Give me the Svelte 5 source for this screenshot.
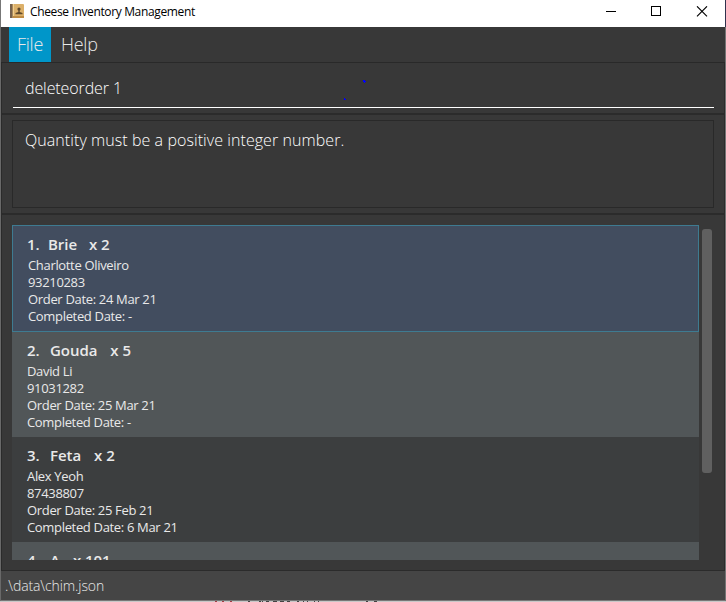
<script>
  const orders = [
    { n: 1, cheese: 'Brie', qty: 2, customer: 'Charlotte Oliveiro', phone: '93210283', ordered: '24 Mar 21', completed: '-' },
    { n: 2, cheese: 'Gouda', qty: 5, customer: 'David Li', phone: '91031282', ordered: '25 Mar 21', completed: '-' },
    { n: 3, cheese: 'Feta', qty: 2, customer: 'Alex Yeoh', phone: '87438807', ordered: '25 Feb 21', completed: '6 Mar 21' },
    { n: 4, cheese: 'A', qty: 101, customer: '', phone: '', ordered: '', completed: '' }
  ];
</script>

<div class="window">
  <header class="titlebar">
    <svg class="logo" width="15" height="15" viewBox="0 0 15 15">
      <rect x="0" y="0" width="14" height="14" rx="1" fill="#dcb069" />
      <rect x="0" y="0" width="2.5" height="14" fill="#76614d" />
      <rect x="3" y="0" width="1" height="14" fill="#f0cf91" />
      <rect x="3" y="12" width="11" height="2" fill="#bf8c44" />
      <circle cx="9" cy="5" r="1.6" fill="#5f492c" />
      <path d="M8.3 6h1.4v2l2.8 1v1.3h-7V9l2.8-1z" fill="#5f492c" />
    </svg>
    <span class="title">Cheese Inventory Management</span>
    <svg class="controls" width="104" height="12" viewBox="0 0 104 12" fill="none" stroke="#000">
      <path d="M0 5.5h10" shape-rendering="crispEdges" />
      <rect x="45.5" y=".5" width="9" height="9" shape-rendering="crispEdges" />
      <path d="M91 .3l10 10M101 .3l-10 10" stroke-width="1.1" />
    </svg>
  </header>
  <div class="body">
    <nav><span class="menu active">File</span><span class="menu">Help</span></nav>
    <section class="command">
      <div class="field"><span>deleteorder 1</span></div>
      <svg class="specks" width="24" height="22" viewBox="0 0 24 22" fill="#0000ff">
        <path d="M19 0h2v1h1v1h-1v1h-1V2h-1zM0 18h1v1H0zM0 19h2v1H0z" />
      </svg>
    </section>
    <section class="result"><div class="message"><span>Quantity must be a positive integer number.</span></div></section>
    <main>
      <div class="list">
        {#each orders as o, i}
          <article class:selected={i === 0} class:alt={i % 2 === 1}>
            <h2><span class="idx">{o.n}.</span><span class="cheese">{o.cheese}</span><span class="qty">x {o.qty}</span></h2>
            {#if o.customer}
              <p>{o.customer}</p>
              <p>{o.phone}</p>
              <p>Order Date: {o.ordered}</p>
              <p>Completed Date: {o.completed}</p>
            {/if}
          </article>
        {/each}
      </div>
      <div class="scroll"><div class="thumb"></div></div>
    </main>
    <footer><span>.\data\chim.json</span></footer>
  </div>
  <svg class="under" width="726" height="1" viewBox="0 0 726 1" shape-rendering="crispEdges" fill="none">
    <path d="M215 .5h2M222 .5h2M230 .5h2" stroke="#a33e45" />
    <path d="M248 .5h2M259 .5h2M262 .5h1M266 .5h3M273 .5h4M280 .5h4M287 .5h3M297 .5h2M303 .5h1M307 .5h1M314 .5h1M318 .5h1M366 .5h2M374 .5h3" stroke="#444" />
  </svg>
</div>

<style>
  :global(body) { overflow: hidden; }
  * { box-sizing: border-box; }
  .window { width: 726px; height: 602px; display: flex; flex-direction: column; font-family: "Open Sans", "Noto Sans", sans-serif; background: #383838; color: #e9e9e9; overflow: hidden; }
  .titlebar { flex: none; height: 27px; background: #fff; color: #000; display: flex; border-left: 1px solid #777; border-right: 1px solid #30324e; }
  .logo { margin: 4px 0 0 9px; }
  .title { font: 12px/24px "Open Sans", sans-serif; margin-left: 5px; letter-spacing: -0.36px; width: 180px; white-space: nowrap; }
  .controls { margin: 6px 15px 0 auto; }
  .body { flex: none; height: 574px; display: flex; flex-direction: column; border-left: 1px solid #696969; border-right: 1px solid #747474; border-bottom: 1px solid #777; }
  nav { flex: none; height: 36px; display: flex; border-bottom: 1px solid #292929; padding-left: 8px; font-size: 18px; font-weight: 300; line-height: 35px; }
  .menu { width: 42px; padding-left: 8px; height: 35px; letter-spacing: -0.25px; }
  .menu + .menu { width: 60px; padding-left: 10px; }
  .active { background: #0096c9; }
  .command { flex: none; height: 52px; position: relative; border: solid #2b2b2b; border-width: 0 1px 2px; padding: 0 10px 0 11px; }
  .field { height: 45px; border-bottom: 1px solid #fff; padding-left: 12px; font-size: 16px; font-weight: 300; line-height: 50px; color: #fff; letter-spacing: -0.1px; }
  .specks { position: absolute; left: 342px; top: 17px; }
  .result { flex: none; height: 100px; padding: 5px 10px; border: solid #2b2b2b; border-width: 0 1px 2px; }
  .message { height: 88px; border: 1px solid #292929; padding: 6px 0 0 12px; font-size: 16px; font-weight: 300; line-height: 26px; color: #fff; letter-spacing: 0.07px; }
  main { flex: none; height: 356px; display: flex; padding: 10px 0 0 10px; border: solid #2b2b2b; border-width: 0 1px 1px; }
  .list { width: 687px; height: 335px; overflow: hidden; }
  article { height: 105px; padding: 7px 0 0 15px; background: #3c3e3f; }
  article.alt { background: #515658; }
  article.selected { height: 107px; border: 1px solid #3e7b91; background: #424d5f; }
  h2 { margin: 0 0 2px; height: 22px; font-size: 15px; line-height: 22px; font-weight: 600; display: flex; letter-spacing: -0.05px; white-space: nowrap; }
  .idx { width: 23px; }
  .selected h2 { margin-left: -1px; }
  .selected .idx { width: 21px; }
  .qty { margin-left: 13px; }
  .selected .qty { margin-left: 12px; }
  p { margin: 0; height: 17px; line-height: 17px; font-size: 13px; letter-spacing: -0.33px; white-space: nowrap; }
  .scroll { padding: 4px 0 0 3px; }
  .thumb { width: 10px; height: 244px; border-radius: 3px; background: #606060; }
  footer { flex: none; height: 29px; background: #454545; padding-left: 4px; font-size: 14px; font-weight: 300; line-height: 30px; letter-spacing: -0.1px; }
  .under { flex: none; display: block; background: #c8c8c8; }
</style>
